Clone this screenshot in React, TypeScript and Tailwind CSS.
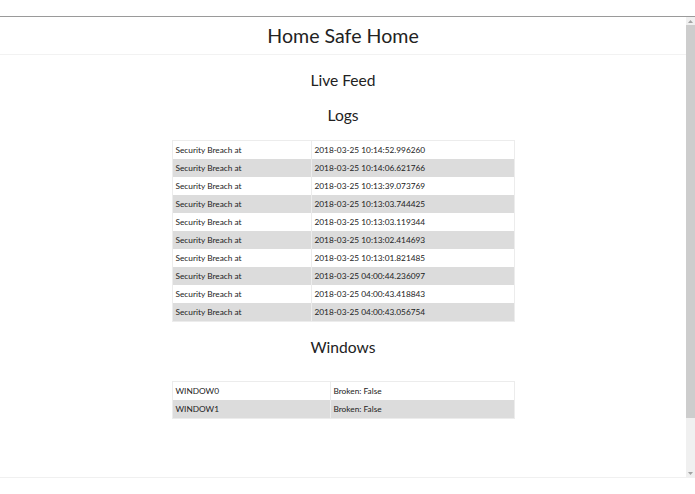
import React from 'react';

const logs = [
  '2018-03-25 10:14:52.996260',
  '2018-03-25 10:14:06.621766',
  '2018-03-25 10:13:39.073769',
  '2018-03-25 10:13:03.744425',
  '2018-03-25 10:13:03.119344',
  '2018-03-25 10:13:02.414693',
  '2018-03-25 10:13:01.821485',
  '2018-03-25 04:00:44.236097',
  '2018-03-25 04:00:43.418843',
  '2018-03-25 04:00:43.056754',
];

const windows = [
  { name: 'WINDOW0', status: 'Broken: False' },
  { name: 'WINDOW1', status: 'Broken: False' },
];

function Scrollbar() {
  return (
    <div className="w-[9px] bg-[#f0f0f0] flex flex-col items-center">
      <div className="h-[8px] w-full flex items-center justify-center">
        <svg width="5" height="3" viewBox="0 0 5 3">
          <path d="M0 3 L2.5 0 L5 3 Z" fill="#a3a3a3" />
        </svg>
      </div>
      <div className="h-[393px] w-full bg-[#cdcdcd]" />
      <div className="flex-1" />
      <div className="h-[8px] w-full flex items-center justify-center">
        <svg width="5" height="3" viewBox="0 0 5 3">
          <path d="M0 0 L2.5 3 L5 0 Z" fill="#a3a3a3" />
        </svg>
      </div>
    </div>
  );
}

export default function App() {
  return (
    <div
      className="w-[695px] h-[494px] bg-white text-[#222] overflow-hidden flex flex-col"
      style={{ fontFamily: 'Lato, "Open Sans", sans-serif' }}
    >
      <div className="h-[17px] border-b border-[#9a9a9a]" />
      <div className="h-[461px] flex border-b border-[#f0f0f0]">
        <div className="flex-1 flex flex-col items-center">
          {/* Header */}
          <div className="w-full h-[38px] border-b border-[#f2f2f2] flex items-center justify-center">
            <h1 className="text-[19.6px] leading-none">Home Safe Home</h1>
          </div>

          <h2 className="mt-[18px] text-[15.6px] leading-none">Live Feed</h2>
          <h2 className="mt-[19px] text-[15.6px] leading-none">Logs</h2>

          {/* Logs table */}
          <div className="mt-[17px] w-[343px] border border-[#ececec] text-[8.3px]">
            {logs.map((ts, i) => (
              <div
                key={ts}
                className={`flex h-[18px] items-center ${i % 2 === 1 ? 'bg-[#dcdcdc]' : 'bg-white'}`}
              >
                <div className="w-[139px] h-full flex items-center pl-[3px] border-r border-[#ececec]">
                  Security Breach at
                </div>
                <div className="flex-1 pl-[3px]">{ts}</div>
              </div>
            ))}
          </div>

          <h2 className="mt-[18px] text-[15.6px] leading-none">Windows</h2>

          {/* Windows table */}
          <div className="mt-[25px] w-[343px] border border-[#ececec] text-[8.3px]">
            {windows.map((w, i) => (
              <div
                key={w.name}
                className={`flex h-[18px] items-center ${i % 2 === 1 ? 'bg-[#dcdcdc]' : 'bg-white'}`}
              >
                <div className="w-[158px] h-full flex items-center pl-[3px] border-r border-[#ececec]">
                  {w.name}
                </div>
                <div className="flex-1 pl-[3px]">{w.status}</div>
              </div>
            ))}
          </div>
        </div>
        <Scrollbar />
      </div>
    </div>
  );
}
